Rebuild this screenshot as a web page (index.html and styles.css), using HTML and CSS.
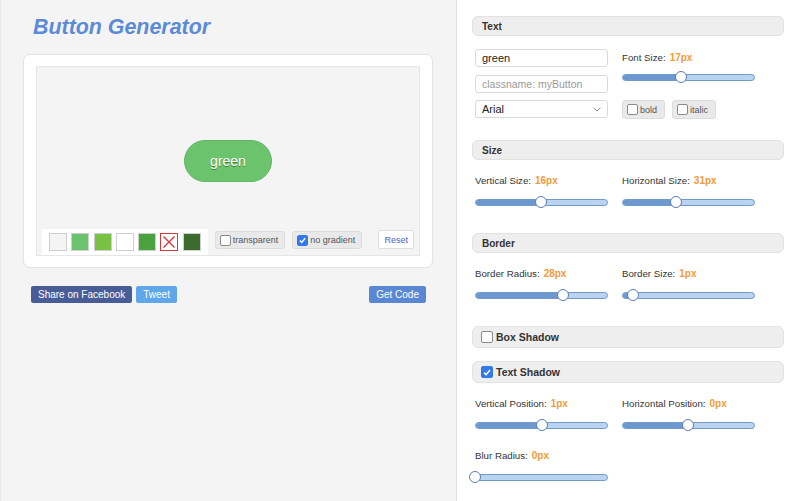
FILE: index.html
```html
<!DOCTYPE html>
<html>
<head>
<meta charset="utf-8">
<link rel="stylesheet" href="styles.css">
</head>
<body>
<div class="page">
  <div class="left">
    <h1 class="title">Button Generator</h1>
    <div class="card">
      <div class="preview">
        <div class="demo-btn">green</div>
        <div class="toolbar">
          <div class="swatches">
            <span class="sw sw-bg"></span>
            <span class="sw sw-g1"></span>
            <span class="sw sw-g2"></span>
            <span class="sw sw-w"></span>
            <span class="sw sw-g3"></span>
            <span class="sw sw-x"><svg width="16" height="16" viewBox="0 0 16 16"><path d="M2.5 2.5 L13.5 13.5 M13.5 2.5 L2.5 13.5" stroke="#d43a3a" stroke-width="1.4" fill="none"/></svg></span>
            <span class="sw sw-g4"></span>
          </div>
          <div class="chip"><span class="cb"></span>transparent</div>
          <div class="chip"><span class="cb on"><svg width="11" height="11" viewBox="0 0 11 11"><path d="M2.3 5.6 L4.5 7.9 L8.8 2.8" stroke="#fff" stroke-width="1.7" fill="none"/></svg></span>no gradient</div>
          <div class="reset">Reset</div>
        </div>
      </div>
    </div>
    <div class="actions">
      <span class="abtn fb">Share on Facebook</span>
      <span class="abtn tw">Tweet</span>
      <span class="abtn code">Get Code</span>
    </div>
  </div>

  <div class="right">
    <div class="sec-head">Text</div>
    <div class="grid text-body">
      <div class="col">
        <div class="field">green</div>
        <div class="field ph">classname: myButton</div>
        <div class="field select">Arial<svg width="8" height="5" viewBox="0 0 8 5"><path d="M0.5 0.7 L4 4 L7.5 0.7" stroke="#8a8a8a" stroke-width="1" fill="none"/></svg></div>
      </div>
      <div class="col">
        <div class="label fs-label">Font Size:<b>17px</b></div>
        <div class="slider fs-slider" style="--v:44.7%"><div class="track"><div class="fill"></div></div><span class="thumb"></span></div>
        <div class="chips">
          <div class="chip"><span class="cb"></span>bold</div>
          <div class="chip"><span class="cb"></span>italic</div>
        </div>
      </div>
    </div>

    <div class="sec-head sec">Size</div>
    <div class="grid body">
      <div class="col">
        <div class="label">Vertical Size:<b>16px</b></div>
        <div class="slider" style="--v:49.6%"><div class="track"><div class="fill"></div></div><span class="thumb"></span></div>
      </div>
      <div class="col">
        <div class="label">Horizontal Size:<b>31px</b></div>
        <div class="slider" style="--v:40.4%"><div class="track"><div class="fill"></div></div><span class="thumb"></span></div>
      </div>
    </div>

    <div class="sec-head sec">Border</div>
    <div class="grid body">
      <div class="col">
        <div class="label">Border Radius:<b>28px</b></div>
        <div class="slider" style="--v:66%"><div class="track"><div class="fill"></div></div><span class="thumb"></span></div>
      </div>
      <div class="col">
        <div class="label">Border Size:<b>1px</b></div>
        <div class="slider" style="--v:8.5%"><div class="track"><div class="fill"></div></div><span class="thumb"></span></div>
      </div>
    </div>

    <div class="sec-head big sec">
      <span class="cb"></span>Box Shadow
    </div>
    <div class="sec-head big sec2">
      <span class="cb on"><svg width="11" height="11" viewBox="0 0 11 11"><path d="M2.3 5.6 L4.5 7.9 L8.8 2.8" stroke="#fff" stroke-width="1.7" fill="none"/></svg></span>Text Shadow
    </div>
    <div class="grid body">
      <div class="col">
        <div class="label">Vertical Position:<b>1px</b></div>
        <div class="slider" style="--v:50.4%"><div class="track"><div class="fill"></div></div><span class="thumb"></span></div>
        <div class="label blur-label">Blur Radius:<b>0px</b></div>
        <div class="slider" style="--v:0%"><div class="track"><div class="fill"></div></div><span class="thumb"></span></div>
      </div>
      <div class="col">
        <div class="label">Horizontal Position:<b>0px</b></div>
        <div class="slider" style="--v:49.4%"><div class="track"><div class="fill"></div></div><span class="thumb"></span></div>
      </div>
    </div>
  </div>
</div>
</body>
</html>
```
FILE: styles.css
```css
* { box-sizing: border-box; }
html, body { margin: 0; padding: 0; }
body {
  font-family: "Liberation Sans", Arial, sans-serif;
  color: #333;
  background: #fff;
}
.page {
  display: flex;
  width: 800px;
  height: 501px;
  overflow: hidden;
}
.left {
  width: 456px;
  flex: none;
  background: #f4f4f4;
  border-left: 1px solid #e8e8e8;
  padding: 15px 0 0 22px;
}
.title {
  margin: 0 0 15px 10px;
  font-size: 21.4px;
  line-height: 24px;
  font-weight: bold;
  font-style: italic;
  color: #5b8ad9;
}
.card {
  width: 410px;
  height: 214px;
  background: #fff;
  border: 1px solid #e3e3e3;
  border-radius: 7px;
  padding: 11px 12px;
}
.preview {
  position: relative;
  height: 190px;
  background: #f4f4f4;
  border: 1px solid #e6e6e6;
  display: flex;
  align-items: center;
  justify-content: center;
}
.demo-btn {
  width: 88px;
  height: 42px;
  border-radius: 21px;
  background: #6cc36e;
  border: 1px solid #62b865;
  color: #fff;
  font-size: 14px;
  text-shadow: 0 1px 0 #3f7d40;
  display: flex;
  align-items: center;
  justify-content: center;
}
.toolbar {
  position: absolute;
  left: 5px;
  right: 5px;
  bottom: 0;
  display: flex;
  align-items: flex-start;
}
.swatches {
  background: #fff;
  height: 26px;
  padding: 4px 7px 0 7px;
  display: flex;
  gap: 4.3px;
}
.sw {
  width: 18px;
  height: 18px;
  border: 1px solid #cfcfcf;
  display: block;
}
.sw-bg { background: #f4f4f4; }
.sw-g1 { background: #6cc36e; }
.sw-g2 { background: #78c142; }
.sw-w { background: #fff; }
.sw-g3 { background: #4aa33e; }
.sw-x { background: #fff; border-color: #d43a3a; }
.sw-x svg { display: block; }
.sw-g4 { background: #3c6b2e; }
.chip {
  height: 18px;
  margin-top: 2px;
  margin-left: 7px;
  padding: 0 6px 0 4px;
  background: #e9e9e9;
  border: 1px solid #dcdcdc;
  border-radius: 3px;
  display: flex;
  align-items: center;
  gap: 2px;
  font-size: 9px;
  color: #555;
}
.cb {
  width: 11px;
  height: 11px;
  border: 1px solid #8a8a8a;
  border-radius: 2px;
  background: #fff;
  display: flex;
  align-items: center;
  justify-content: center;
  flex: none;
}
.cb.on {
  background: #3478f0;
  border-color: #3478f0;
}
.cb svg { display: block; }
.reset {
  margin-left: auto;
  margin-top: 1px;
  height: 19px;
  padding: 0 5px;
  background: #fff;
  border: 1px solid #dedede;
  border-radius: 2px;
  font-size: 9px;
  color: #4a63cf;
  display: flex;
  align-items: center;
}
.actions {
  width: 410px;
  margin-top: 18px;
  padding: 0 7px 0 8px;
  display: flex;
  gap: 4px;
}
.abtn {
  height: 17px;
  padding: 0 7px;
  border-radius: 2px;
  color: #fff;
  font-size: 10px;
  display: flex;
  align-items: center;
}
.fb { background: #485d98; }
.tw { background: #5ea8ea; }
.code { background: #5a87d4; margin-left: auto; }

.right {
  flex: 1;
  background: #fff;
  border-left: 1px solid #e2e2e2;
  padding: 16px 16px 0 15px;
}
.sec-head {
  height: 20px;
  background: #eeeeee;
  border: 1px solid #e2e2e2;
  border-radius: 6px;
  padding-left: 9px;
  display: flex;
  align-items: center;
  font-size: 10px;
  font-weight: bold;
  color: #333;
}
.sec-head.big {
  height: 22px;
  padding-left: 8px;
  font-size: 10.5px;
  gap: 3px;
}
.sec-head.big .cb { width: 12px; height: 12px; }
.sec { margin-top: 21px; }
.body + .sec { margin-top: 25px; }
.sec2 { margin-top: 13px; }
.grid {
  display: grid;
  grid-template-columns: 133px 133px;
  column-gap: 14px;
  padding: 0 3px;
}
.text-body { margin-top: 13px; }
.body { margin-top: 14px; }
.col { display: flex; flex-direction: column; }
.field {
  height: 18px;
  border: 1px solid #dadada;
  border-radius: 3px;
  padding: 0 6px;
  font-size: 11px;
  color: #222;
  display: flex;
  align-items: center;
  justify-content: space-between;
}
.field + .field { margin-top: 8px; }
.field.ph { color: #9a9a9a; font-size: 10.5px; margin-top: 8px; }
.field.select { margin-top: 7px; }
.label {
  font-size: 9.7px;
  line-height: 13px;
  height: 13px;
  color: #333;
  white-space: nowrap;
}
.label b {
  color: #f29b36;
  font-size: 10px;
  margin-left: 4px;
}
.fs-label { margin-top: 2px; }
.slider {
  position: relative;
  height: 12px;
  margin-top: 9px;
  display: flex;
  align-items: center;
}
.fs-slider { margin-top: 7px; }
.track {
  flex: 1;
  height: 7px;
  border: 1px solid #7398cc;
  border-radius: 4px;
  background: #b9d3f0;
  overflow: hidden;
}
.fill {
  height: 100%;
  width: var(--v);
  background: #6c97cf;
}
.thumb {
  position: absolute;
  top: 0;
  left: calc(var(--v) - 6px);
  width: 12px;
  height: 12px;
  border-radius: 50%;
  background: #fff;
  border: 1.2px solid #5c7fb6;
}
.chips {
  display: flex;
  margin-top: 17px;
}
.chips .chip { margin-top: 0; margin-left: 0; height: 19px; padding-right: 7px; }
.chips .chip + .chip { margin-left: 7px; }
.blur-label { margin-top: 18px; }
```
